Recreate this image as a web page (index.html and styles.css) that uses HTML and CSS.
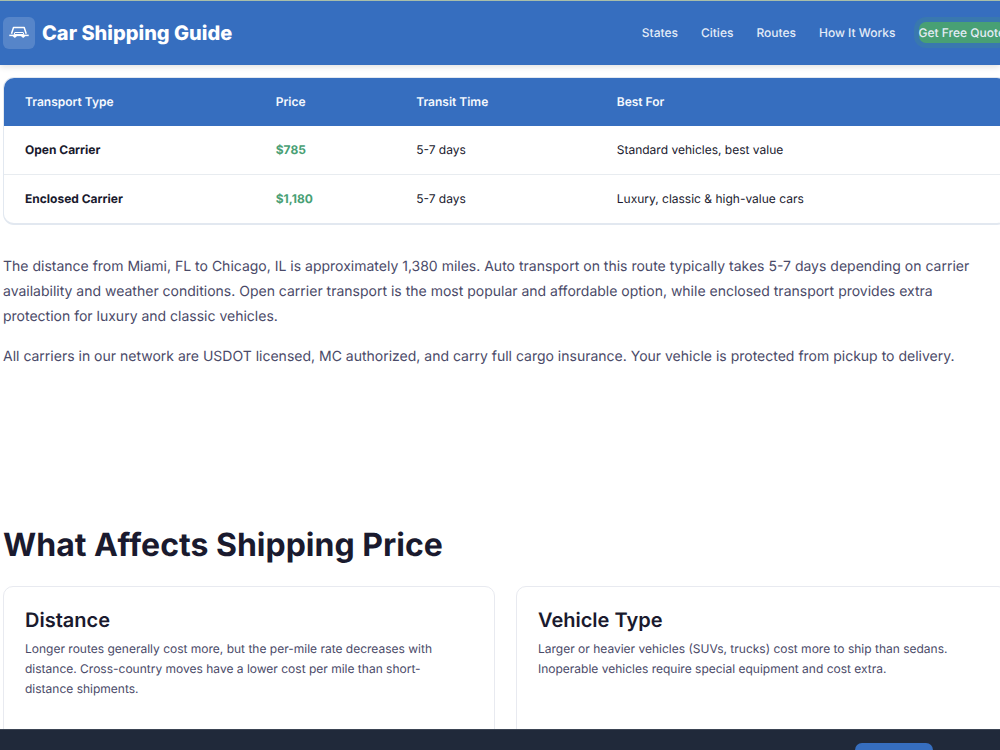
FILE: index.html
```html
<!DOCTYPE html>
<html lang="en">
<head>
<meta charset="utf-8">
<meta name="viewport" content="width=device-width, initial-scale=1">
<title>Car Shipping Guide</title>
<link rel="stylesheet" href="styles.css">
</head>
<body>
<div class="page">
  <header class="site-header">
    <div class="container header-row">
      <a class="brand" href="#">
        <span class="brand-icon">
          <svg viewBox="0 0 20 20" width="20" height="20" fill="none" stroke="currentColor" stroke-width="1.5" stroke-linejoin="round" aria-hidden="true">
            <path d="M2.500 10.800 4.500 4.500H15.200L17.200 10.800"/>
            <path d="M5.800 9.500H14.200L14.800 11.500H5.200Z" stroke-width="1"/>
            <path d="M.3 12.400H19.700"/>
            <path d="M4 12.500 5.800 14.200 7.600 12.500M12.400 12.500 14.200 14.200 16 12.500" stroke-width="1.200"/>
          </svg>
        </span>
        Car Shipping Guide
      </a>
      <nav class="nav">
        <a href="#">States</a>
        <a href="#">Cities</a>
        <a href="#">Routes</a>
        <a href="#">How It Works</a>
        <a class="cta" href="#">Get Free Quote</a>
      </nav>
    </div>
  </header>
  <main class="content">
    <div class="container">
      <div class="table-card">
        <table class="prices">
          <thead>
            <tr><th class="col-type" scope="col">Transport Type</th><th class="col-price" scope="col">Price</th><th class="col-time" scope="col">Transit Time</th><th scope="col">Best For</th></tr>
          </thead>
          <tbody>
            <tr><td class="name">Open Carrier</td><td class="price">$785</td><td>5-7 days</td><td>Standard vehicles, best value</td></tr>
            <tr><td class="name">Enclosed Carrier</td><td class="price">$1,180</td><td>5-7 days</td><td>Luxury, classic &amp; high-value cars</td></tr>
          </tbody>
        </table>
      </div>
      <div class="prose">
        <p>The distance from Miami, FL to Chicago, IL is approximately 1,380 miles. Auto transport on this route typically takes 5-7 days depending on carrier availability and weather conditions. Open carrier transport is the most popular and affordable option, while enclosed transport provides extra protection for luxury and classic vehicles.</p>
        <p>All carriers in our network are USDOT licensed, MC authorized, and carry full cargo insurance. Your vehicle is protected from pickup to delivery.</p>
      </div>
      <section class="factors">
        <h2>What Affects Shipping Price</h2>
        <div class="cards">
          <article class="card">
            <h3>Distance</h3>
            <p>Longer routes generally cost more, but the per-mile rate decreases with distance. Cross-country moves have a lower cost per mile than short-distance shipments.</p>
          </article>
          <article class="card">
            <h3>Vehicle Type</h3>
            <p>Larger or heavier vehicles (SUVs, trucks) cost more to ship than sedans. Inoperable vehicles require special equipment and cost extra.</p>
          </article>
        </div>
      </section>
    </div>
  </main>
  <aside class="banner"><button class="banner-button" type="button" aria-label="Accept"></button></aside>
</div>
</body>
</html>
```
FILE: styles.css
```css
* { box-sizing: border-box; }
body {
  margin: 0;
  font-family: Inter, "Liberation Sans", sans-serif;
  text-rendering: geometricPrecision;
  color: #1a1a2e;
  background: #fff;
}
h2, h3, p { margin: 0; }
a { color: inherit; text-decoration: none; }
.page {
  display: flex;
  flex-direction: column;
  height: 100vh;
  overflow: hidden;
}
.container { margin: 0 -8px 0 3px; }
.site-header {
  flex: none;
  background: #366ebf;
  border-top: 1px solid #a9bea9;
  color: #fff;
  box-shadow: 0 2px 6px rgba(0, 0, 0, .12);
  z-index: 1;
}
.header-row {
  display: flex;
  justify-content: space-between;
  align-items: center;
  height: 64px;
}
.brand {
  display: flex;
  align-items: center;
  gap: 7px;
  font-size: 20px;
  font-weight: 800;
}
.brand-icon {
  display: grid;
  place-items: center;
  width: 32px;
  height: 32px;
  border-radius: 6px;
  background: rgba(255, 255, 255, .16);
}
.nav {
  display: flex;
  align-items: center;
  gap: 23px;
  padding: 0 3px 2px 0;
  font-size: 12px;
  font-weight: 500;
  line-height: 21px;
  color: #e4ecf7;
}
.cta {
  border-radius: 7px;
  background: #48a074;
  box-shadow: 0 0 0 5px rgba(72, 160, 116, .2);
}
.content {
  flex: 1;
  min-height: 0;
  overflow: hidden;
  padding-top: 12px;
}
.table-card {
  border: 1px solid #e2e8f0;
  border-bottom-width: 2px;
  border-radius: 11px;
  overflow: hidden;
}
.prices {
  width: 100%;
  table-layout: fixed;
  border-collapse: collapse;
  font-size: 12px;
  line-height: 20px;
}
.prices th, .prices td { padding: 14px 21px; text-align: left; }
.prices th { background: #366ebf; color: #f4f8fd; font-weight: 600; }
.prices tbody tr + tr { border-top: 1px solid #e8ecf0; }
.col-type { width: 25%; }
.col-price { width: 14%; }
.col-time { width: 20%; }
.prices .name { font-weight: 700; }
.prices .price { color: #48a074; font-weight: 700; }
.prose {
  display: grid;
  gap: 15px;
  margin-top: 29px;
  padding-right: 8px;
  font-size: 14px;
  line-height: 25px;
  color: #4a4a68;
}
.factors { margin-top: 156px; }
.factors h2 { font-size: 32px; line-height: 40px; font-weight: 700; }
.cards {
  display: grid;
  grid-template-columns: 1fr 1fr;
  gap: 21px;
  margin-top: 21px;
}
.card {
  min-height: 160px;
  padding: 21px;
  border: 1px solid #e8eaf0;
  border-radius: 10px;
}
.card h3 { font-size: 20px; line-height: 24px; font-weight: 600; }
.card p { margin-top: 7px; padding-right: 14px; font-size: 12px; line-height: 20px; color: #4a4a68; }
.banner {
  flex: none;
  display: flex;
  justify-content: flex-end;
  height: 21px;
  padding: 13px 67px 0 0;
  overflow: hidden;
  background: #20293a;
  border-top: 1px solid #3b4453;
}
.banner-button {
  flex: none;
  width: 78px;
  height: 32px;
  border: 0;
  border-radius: 7px;
  background: #366ebf;
}
```
